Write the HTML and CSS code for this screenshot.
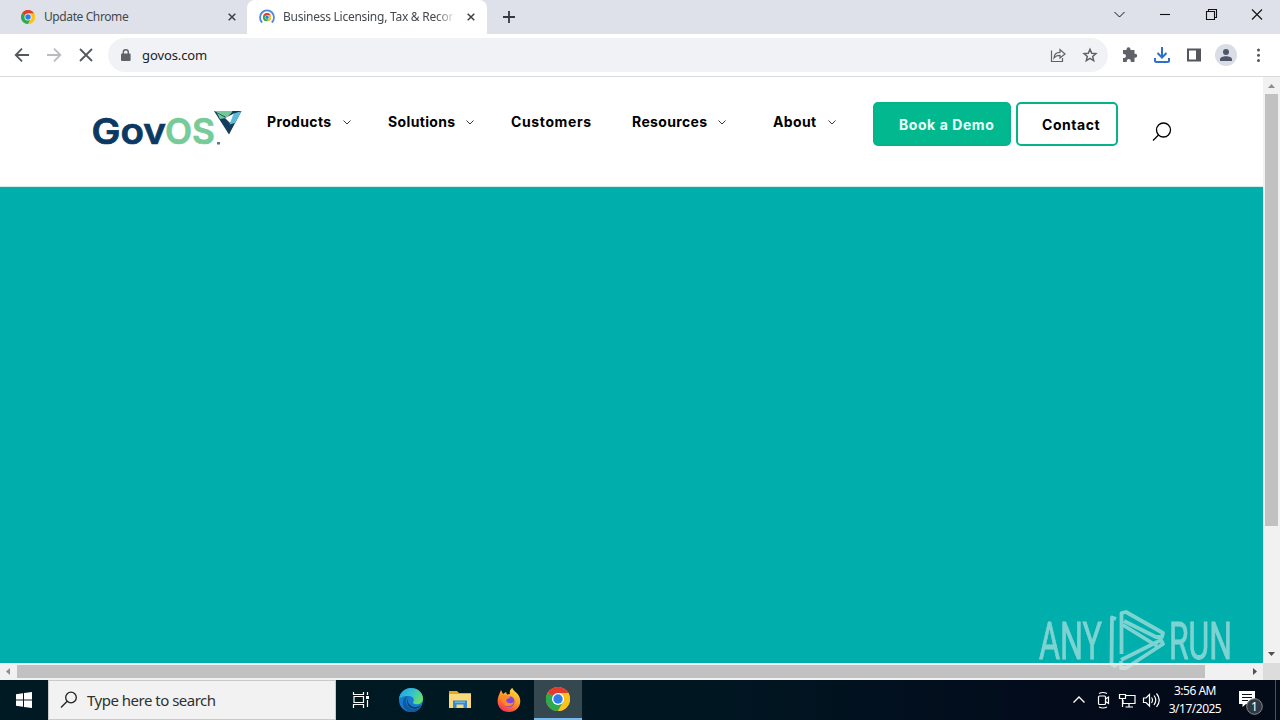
FILE: index.html
```html
<!DOCTYPE html>
<html lang="en">
<head>
<meta charset="utf-8">
<title>GovOS</title>
<link rel="stylesheet" href="styles.css">
</head>
<body>
<svg class="defs" width="0" height="0" aria-hidden="true">
  <symbol id="chrome" viewBox="0 0 24 24">
    <circle cx="12" cy="12" r="12" fill="#fbc116"/>
    <path d="M12 12 1.6 6A12 12 0 0 1 22.4 6H12Z" fill="#e33b2e"/>
    <path d="M12 12 1.6 6A12 12 0 0 0 12 24L17.2 15Z" fill="#2da94f"/>
    <path d="M12 6H22.4A12 12 0 0 1 12 24L17.2 15Z" fill="#fcc31e"/>
    <circle cx="12" cy="12" r="6" fill="#fff"/><circle cx="12" cy="12" r="4.7" fill="#2f7de9"/>
  </symbol>
  <symbol id="close" viewBox="0 0 8 8"><path d="M.7.7 7.3 7.3M7.3.7.7 7.3" stroke="#3c4043" stroke-width="1.5"/></symbol>
  <symbol id="chev" viewBox="0 0 8 5"><path d="M.5.5 4 4 7.5.5" fill="none" stroke="#222" stroke-width=".9"/></symbol>
</svg>
<div class="screen">
  <div class="tabs">
    <div class="tab tab-first">
      <svg class="fav" width="14" height="14"><use href="#chrome"/></svg>
      <span class="title t1">Update Chrome</span>
      <svg width="8" height="8"><use href="#close"/></svg>
    </div>
    <div class="tab tab-active">
      <svg class="fav2" width="16" height="16" viewBox="0 0 16 16"><path d="M3.2 13.5A7 7 0 1 1 12.8 13.5" fill="none" stroke="#5187dc" stroke-width="1.8"/><svg x="3.800" y="4" width="8.5" height="8.5"><use href="#chrome"/></svg></svg>
      <span class="title t2">Business Licensing, Tax &amp; Recor</span>
      <svg width="8" height="8"><use href="#close"/></svg>
    </div>
    <svg class="plus" width="12" height="12"><path d="M6 0V12M0 6H12" stroke="#35383c" stroke-width="1.8"/></svg>
    <svg class="winctl" width="152" height="14" viewBox="0 0 152 14" fill="none" stroke="#111" stroke-width="1.1">
      <path d="M1.5 5 6.5 10 11.5 5" stroke-width="1"/><path d="M47 7.5H57"/>
      <path d="M93.5 4.5H101.5V12.5H93.5ZM95.5 4.5V2.5H103.5V10.5H101.5"/><path d="M139 2.5 149 12.5M149 2.5 139 12.5"/>
    </svg>
  </div>
  <div class="toolbar">
    <svg class="navicons" width="82" height="16" viewBox="0 0 82 16" fill="none" stroke="#54585c" stroke-width="1.8">
      <path d="M15 8H2M8 1.7 1.7 8 8 14.3"/>
      <path d="M33 8H46M40 1.7 46.3 8 40 14.3" stroke="#b9bbbe"/>
      <path d="M66 2 78 14M78 2 66 14"/>
    </svg>
    <div class="omnibox">
      <svg width="10" height="13" viewBox="0 0 10 13"><rect y="4.5" width="9.6" height="7.5" rx="1" fill="#5f6368"/><path d="M2.3 5V3.2a2.4 2.4 0 0 1 5 0V5" fill="none" stroke="#5f6368" stroke-width="1.4"/></svg>
      <span class="url">govos.com</span>
      <svg class="omniicons" width="50" height="16" viewBox="0 0 50 16" fill="none" stroke="#5f6368" stroke-width="1.2">
        <path d="M1.5 3.5V14.5H12.5V11M4 11C4.3 7 6.5 5.4 10 5.4V2.5L15 7 10 11V8.3C7.4 8.2 5.5 9 4 11Z"/>
        <path d="M40 2.300 41.700 6.300 45.900 6.600 42.700 9.400 43.700 13.600 40 11.400 36.300 13.600 37.300 9.400 34.100 6.600 38.300 6.300Z" stroke-width="1.500"/>
      </svg>
    </div>
    <svg class="toolicons" width="144" height="22" viewBox="0 0 144 22">
      <path d="M2 6H5.500V5.200a2 2 0 0 1 4 0V6H13.500v3.800h.700a2 2 0 0 1 0 4H13.500V18H9.800V17a2 2 0 0 0-4 0v1H2V14H3a2 2 0 0 0 0-4H2Z" fill="#5f6368"/>
      <path d="M41 3V13M36.500 9 41 13.500 45.500 9M34 14V16.500Q34 18 35.500 18H46.500Q48 18 48 16.500V14" fill="none" stroke="#2a70cc" stroke-width="2"/>
      <path d="M66 4.500H80V17.500H66ZM68 6.500V15.500H75V6.500Z" fill="#53575b" fill-rule="evenodd"/>
      <circle cx="105" cy="11" r="11" fill="#dadce6"/><circle cx="105" cy="8" r="3" fill="#50566a"/><path d="M99 17V15.500C99 13 102 12.200 105 12.200S111 13 111 15.500V17Z" fill="#50566a"/>
      <g fill="#54585c"><circle cx="137.500" cy="6" r="1.500"/><circle cx="137.500" cy="11.200" r="1.500"/><circle cx="137.500" cy="16.400" r="1.500"/></g>
    </svg>
  </div>
  <div class="view">
    <div class="page">
      <header class="site">
        <svg class="logo" width="152" height="48" viewBox="0 0 152 48">
          <g class="logotext"><text x="0.500" y="34" textLength="74.500" lengthAdjust="spacingAndGlyphs" fill="#0b3964" stroke="#0b3964">Gov</text><text x="74" y="34" textLength="50" lengthAdjust="spacingAndGlyphs" fill="#76cb98" stroke="#76cb98">OS</text></g>
          <path d="M123 1H150.500L138 24.500Z" fill="#123d5e"/>
          <path d="M123 1H142L136 7.500Z" fill="#70c996"/><path d="M126 3 135 8 129 9Z" fill="#71c998"/><path d="M134 8 143 3.500 145 6 139 13Z" fill="#fff"/>
          <path d="M143 2.500 150.500 1 144 13 138.500 14.500Z" fill="#5bbbd9"/><path d="M141 1H150.500L143 3.500Z" fill="#103c5c"/><rect x="126" y="32" width="3" height="2.500" fill="#60778e"/>
        </svg>
        <nav class="menu">
          <a>Products <svg width="8" height="5"><use href="#chev"/></svg></a>
          <a>Solutions <svg width="8" height="5"><use href="#chev"/></svg></a>
          <a>Customers</a>
          <a>Resources <svg width="8" height="5"><use href="#chev"/></svg></a>
          <a>About <svg width="8" height="5"><use href="#chev"/></svg></a>
        </nav>
        <a class="btn demo">Book a Demo</a>
        <a class="btn contact">Contact</a>
        <svg class="search" width="20" height="20" viewBox="0 0 20 20" fill="none" stroke="#000" stroke-width="1.300"><circle cx="11.500" cy="8" r="7"/><path d="M6.500 13 1 18.500"/></svg>
      </header>
      <main class="hero"></main>
    </div>
    <div class="vbar">
      <svg width="17" height="17"><path d="M5 11H12L8.500 7Z" fill="#8f8f8f"/></svg>
      <div class="vthumb"></div>
      <svg width="17" height="17"><path d="M5 6H12L8.500 10Z" fill="#505050"/></svg>
    </div>
  </div>
  <div class="hbar">
    <svg width="17" height="17"><path d="M10 5V12L6 8.500Z" fill="#8f8f8f"/></svg>
    <div class="hthumb"></div>
    <svg width="17" height="17"><path d="M7 5V12L11 8.500Z" fill="#505050"/></svg>
    <div class="corner"></div>
  </div>
  <div class="taskbar">
    <div class="start"><svg width="16" height="16" viewBox="0 0 16 16" fill="#fff"><path d="M0 2.200 7 1.200V7.500H0ZM8 1 16 0V7.500H8ZM0 8.500H7V14.800L0 13.800ZM8 8.500H16V16L8 15Z"/></svg></div>
    <div class="find"><svg width="18" height="18" viewBox="0 0 18 18" fill="none" stroke="#222" stroke-width="1.300"><circle cx="11" cy="6.500" r="5.300"/><path d="M7.200 10.300 1 16.500"/></svg><span>Type here to search</span></div>
    <div class="app first"><svg width="18" height="18" viewBox="0 0 18 18" fill="none" stroke="#fff" stroke-width="1.200"><path d="M1.500 1V3.500H11.500V1M1.500 17V13.500H11.500V17M2 5.500H11.500V11.500H2ZM15.500 1V4M15.500 9V16"/><path d="M14 5H17V8H14Z" fill="#fff" stroke="none"/></svg></div>
    <div class="app"><svg width="26" height="26" viewBox="0 0 26 26">
      <defs><linearGradient id="eg" x1="0" y1="0" x2="1" y2=".5"><stop offset="0" stop-color="#1b9de2"/><stop offset=".55" stop-color="#35c1d0"/><stop offset="1" stop-color="#64dd70"/></linearGradient></defs>
      <circle cx="13" cy="13" r="12" fill="#167bd0"/>
      <path d="M1 12C2 5 7 1 13 1C20 1 25 6 25 11.500C25 16 21 18 17 17C15 16.500 14.500 15.600 15.500 14.400C17 12 14.500 9.200 11 9C6 8.500 2 10 1 12Z" fill="url(#eg)"/>
      <path d="M10 9C6 12 8 20 14 22C18 23 21 21.500 23.500 19C21 24 17 25.500 13 25C7 24 4 19 5 14C5.600 11 7.500 9.500 10 9Z" fill="#12599f"/><path d="M11 10C8 14 11 19 16 20C20 20.500 22 19 24 17.500L22 20C18 23 12 22 10 18C8.500 15 9 12 11 10Z" fill="#0b3f6b"/></svg></div>
    <div class="app"><svg width="22" height="20" viewBox="0 0 22 20"><path d="M0 1H8L10 3H22V18H0Z" fill="#e7a71e"/><path d="M0 4H22V18H0Z" fill="#fbd978"/><path d="M4 18V10.500H18V18H14.500V14.500H7.500V18Z" fill="#328bd2"/><path d="M6 11.500H16V13H6Z" fill="#68b7e8"/></svg></div>
    <div class="app"><svg width="24" height="26" viewBox="0 0 24 26"><defs><linearGradient id="fg" x1=".8" y1="0" x2=".3" y2="1"><stop offset="0" stop-color="#ffe33f"/><stop offset=".5" stop-color="#ff9723"/><stop offset="1" stop-color="#f42f57"/></linearGradient></defs><path d="M4 3 6 7 9 5 10 7.500 13 7C12 4 14 1.500 15.500 1C16 4 20 5 22 9C26 17 20 25 12 25C3 25-1.500 17 1.500 9Z" fill="url(#fg)"/><circle cx="12" cy="14.500" r="5.500" fill="#8146d9"/><path d="M4 8 11 8.500C14 9 14 11 11 11.500L9 13C10 17 14 17 17 15C16 20 8 21 6 16Z" fill="#ff8a24"/></svg></div>
    <div class="app on"><svg width="24" height="24"><use href="#chrome"/></svg></div>
    <svg class="tray" width="90" height="20" viewBox="0 0 90 20" fill="none" stroke="#fff" stroke-width="1.200">
      <path d="M1.500 12.500 7 7 12.500 12.500" stroke-width="1.400"/>
      <rect x="26.500" y="6" width="7" height="8.500" rx="1"/><path d="M33.500 9 36.500 7V13.500L33.500 11.500M27 3.500Q31 1.500 35 3.500M27 17Q31 19 35 17"/>
      <path d="M54 5.500H63V13.500H51V10M57 13.500V17M53.500 17H61M47.500 4.500H53.500V8.500H47.500ZM50.500 8.500V17"/>
      <path d="M71.500 8H74L77.500 4.500V16L74 12.500H71.500ZM79.500 7.500Q81.500 10 79.500 13M82 5.500Q85.500 10 82 15M84.500 3.500Q90 10 84.500 17"/>
    </svg>
    <div class="clock"><span>3:56 AM</span><span>3/17/2025</span></div>
    <div class="note"><svg width="26" height="26" viewBox="0 0 26 26"><path d="M1 2H17V15H8L4.500 18V15H1Z" fill="#fff"/><path d="M4 5.500H14M4 8.500H14M4 11.500H10" stroke="#08131f" stroke-width="1.200"/><circle cx="16.500" cy="17.500" r="7.800" fill="#323840" stroke="#858a90"/><text x="13" y="22" class="count">1</text></svg></div>
    <div class="peek"></div>
  </div>
  <svg class="watermark" width="200" height="64" viewBox="0 0 200 64">
    <g class="wmtext"><text x="3" y="50" textLength="63" lengthAdjust="spacingAndGlyphs">ANY</text><text x="133" y="50" textLength="63" lengthAdjust="spacingAndGlyphs">RUN</text></g>
    <path class="wmline" d="M80 10 76 8.500 75.500 55 79 57 81 55M85.500 45V4L90 3 127 24 126 28 120 28 88 12M87 16 121 37M85 51 125 31 127 35 90 59 85 59V52"/>
  </svg>
</div>
</body>
</html>
```
FILE: styles.css
```css
* { box-sizing: border-box; }
body { margin: 0; font-family: "Noto Sans", "Open Sans", sans-serif; overflow: hidden; }
svg { display: block; flex: none; }
.defs { position: absolute; }
.screen { position: relative; width: 1280px; height: 720px; display: flex; flex-direction: column; overflow: hidden; background: #fff; }
.tabs { height: 34px; flex: none; display: flex; align-items: center; background: #dee1e9; }
.tab { height: 34px; display: flex; align-items: center; font-size: 12px; color: #44484c; }
.tab-first { width: 247px; padding-left: 21px; }
.tab-active { width: 240px; padding-left: 12px; background: #fff; border-radius: 8px 8px 0 0; }
.title { white-space: nowrap; line-height: 20px; }
.t1 { width: 184px; margin-left: 9px; letter-spacing: -.4px; }
.t2 { width: 173px; margin: 0 11px 0 8px; letter-spacing: -.26px; -webkit-mask-image: linear-gradient(90deg, #000 153px, transparent 173px); mask-image: linear-gradient(90deg, #000 153px, transparent 173px); }
.plus { margin-left: 16px; }
.winctl { margin: 0 15px 6px auto; }
.toolbar { height: 43px; flex: none; display: flex; align-items: center; border-bottom: 1px solid #d8dadd; }
.navicons { margin-left: 14px; }
.omnibox { width: 1000px; height: 34px; margin-left: 12px; display: flex; align-items: center; padding: 0 8px 0 13px; border-radius: 17px; background: #f0f2f5; }
.url { margin-left: 11px; font-size: 13px; letter-spacing: -.1px; color: #202124; }
.omniicons { margin-left: auto; }
.toolicons { margin-left: 13px; }
.view { height: 586px; flex: none; display: flex; }
.page { width: 1263px; display: flex; flex-direction: column; }
.site { height: 110px; flex: none; display: flex; align-items: flex-start; border-bottom: 1px solid #d5eeeb; font-family: Inter, sans-serif; }
.logo { margin: 33px 0 0 91px; overflow: visible; }
.logotext { font: 600 36px Inter, sans-serif; stroke-width: .7px; }
.menu { display: grid; grid-template-columns: 121px 123px 121px 141px 100px; margin: 35px 0 0 24px; line-height: 20px; }
.menu a { display: flex; align-items: center; justify-content: space-between; font-size: 14px; font-weight: 700; letter-spacing: .36px; color: #000; }
.menu a:nth-child(1) { width: 84px; }
.menu a:nth-child(2) { width: 86px; }
.menu a:nth-child(3) { letter-spacing: .62px; }
.menu a:nth-child(4) { width: 94px; }
.menu a:nth-child(5) { width: 63px; }
.btn { height: 44px; margin-top: 25px; padding-left: 24px; border: 2px solid #06b48b; border-radius: 5px; font-size: 14px; font-weight: 700; line-height: 41px; letter-spacing: .56px; white-space: nowrap; }
.demo { width: 138px; background: #02b98f; color: #e9fff9; }
.contact { width: 102px; margin-left: 5px; color: #000; }
.search { margin: 45px 0 0 34px; }
.hero { flex: 1; background: #00aeac; }
.vbar { width: 17px; display: flex; flex-direction: column; background: #f1f1f1; }
.vthumb { width: 13px; height: 432px; margin: 0 2px auto; background: #c1c1c1; }
.hbar { height: 17px; flex: none; display: flex; align-items: center; background: #f1f1f1; }
.hthumb { width: 1188px; height: 13px; margin-right: auto; background: #c1c1c1; }
.corner { width: 17px; height: 17px; background: #dcdcdc; }
.taskbar { height: 40px; flex: none; display: flex; align-items: center; background: linear-gradient(90deg, #001a23, #001722 55%, #030c1c 80%, #030a18); color: #fff; }
.start { width: 48px; display: flex; justify-content: center; }
.find { width: 288px; height: 40px; display: flex; align-items: center; padding-left: 11px; background: #f2f2f2; border: 1px solid #c9c9c9; color: #303030; font-size: 15px; }
.find span { margin-left: 9px; letter-spacing: -.5px; white-space: nowrap; }
.app { width: 49px; height: 40px; display: flex; align-items: center; justify-content: center; }
.first { padding-right: 1px; width: 50px; }
.on { width: 48px; margin-left: 1px; background: #35474f; border-bottom: 2px solid #76b9ed; }
.tray { margin-left: auto; }
.clock { width: 58px; margin-left: 4px; display: flex; flex-direction: column; align-items: center; font-size: 12px; line-height: 18px; letter-spacing: -.5px; white-space: nowrap; }
.note { width: 26px; margin: 4px 11px 0 14px; }
.count { font-size: 12px; fill: #fff; }
.peek { width: 5px; height: 40px; border-left: 1px solid #4b535e; }
.watermark { position: absolute; left: 1036px; top: 609px; opacity: .58; overflow: visible; }
.wmtext { font: 400 51px Roboto, sans-serif; fill: #d7eeee; stroke: #d7eeee; stroke-width: .8px; }
.wmline { fill: none; stroke: #d7eeee; stroke-width: 3.8px; stroke-linejoin: round; }
```
